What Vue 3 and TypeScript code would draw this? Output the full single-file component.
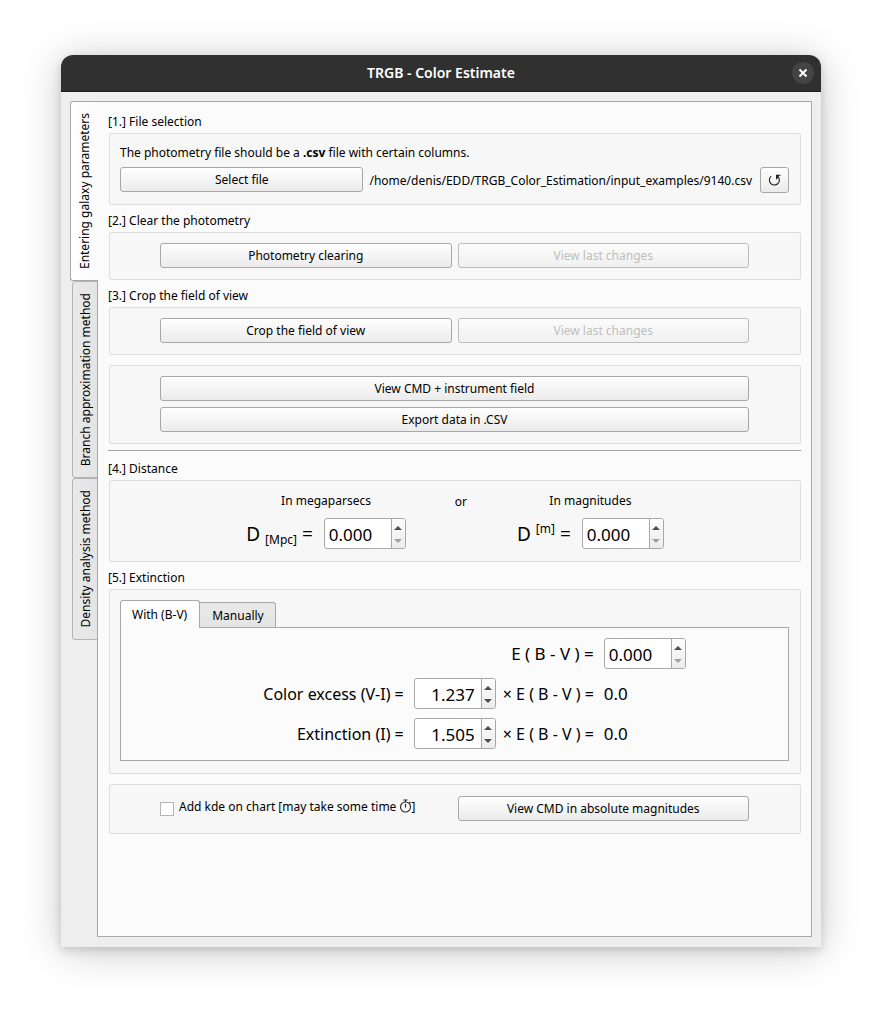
<script setup lang="ts">
import { computed, reactive, ref } from 'vue'

type SpinKey = 'mpc' | 'mag' | 'ebv' | 'vi' | 'ext'

const sideTabs = ['Entering galaxy parameters', 'Branch approximation method', 'Density analysis method']
const extinctionTabs = ['With (B-V)', 'Manually']
const activeSide = ref(0)
const activeExt = ref(0)
const addKde = ref(false)
const values = reactive<Record<SpinKey, string>>({
  mpc: '0.000',
  mag: '0.000',
  ebv: '0.000',
  vi: '1.237',
  ext: '1.505',
})

const num = (k: SpinKey) => Number(values[k]) || 0

function step(k: SpinKey, delta: number) {
  values[k] = Math.max(0, num(k) + delta).toFixed(3)
}

function product(k: SpinKey) {
  const v = Math.round(num(k) * num('ebv') * 1000) / 1000
  return Number.isInteger(v) ? v.toFixed(1) : String(v)
}

const colorExcess = computed(() => product('vi'))
const extinction = computed(() => product('ext'))

const distances: { key: SpinKey; title: string; unit: string; sub: boolean }[] = [
  { key: 'mpc', title: 'In megaparsecs', unit: '[Mpc]', sub: true },
  { key: 'mag', title: 'In magnitudes', unit: '[m]', sub: false },
]

const coefficients: { key: SpinKey; label: string }[] = [
  { key: 'vi', label: 'Color excess (V-I) =' },
  { key: 'ext', label: 'Extinction (I) =' },
]
</script>

<template>
  <div class="desktop">
    <div class="window">
      <header class="titlebar">
        <h1>TRGB - Color Estimate</h1>
        <button class="close" type="button" aria-label="Close">
          <svg viewBox="0 0 10 10" width="10" height="10"><path d="M1.5 1.5 8.5 8.5M8.5 1.5 1.5 8.5" /></svg>
        </button>
      </header>

      <div class="body">
        <nav class="side" role="tablist" aria-orientation="vertical">
          <button
            v-for="(t, i) in sideTabs"
            :key="t"
            type="button"
            role="tab"
            class="side-tab"
            :class="{ active: activeSide === i }"
            :aria-selected="activeSide === i"
            @click="activeSide = i"
          >
            <span>{{ t }}</span>
          </button>
        </nav>

        <main class="pane">
          <h2>[1.] File selection</h2>
          <section class="group">
            <p class="hint">The photometry file should be a <b>.csv</b> file with certain columns.</p>
            <div class="file-row">
              <button class="btn" type="button">Select file</button>
              <span class="path">/home/denis/EDD/TRGB_Color_Estimation/input_examples/9140.csv</span>
              <button class="btn reload" type="button" aria-label="Reload">
                <svg viewBox="0 0 14 14" width="14" height="14">
                  <path d="M3.2 3.2A5 5 0 1 0 10 3.6" />
                  <path class="head" d="M8 1.8H12.6V2.8H11L9 6.2H8Z" />
                </svg>
              </button>
            </div>
          </section>

          <h2>[2.] Clear the photometry</h2>
          <section class="group pair">
            <button class="btn" type="button">Photometry clearing</button>
            <button class="btn" type="button" disabled>View last changes</button>
          </section>

          <h2>[3.] Crop the field of view</h2>
          <section class="group pair">
            <button class="btn" type="button">Crop the field of view</button>
            <button class="btn" type="button" disabled>View last changes</button>
          </section>

          <section class="group stack">
            <button class="btn" type="button">View CMD + instrument field</button>
            <button class="btn" type="button">Export data in .CSV</button>
          </section>

          <hr />

          <h2 class="after-rule">[4.] Distance</h2>
          <section class="group distance">
            <template v-for="(d, i) in distances" :key="d.key">
              <span v-if="i === 1" class="or">or</span>
              <div class="dist">
                <span class="dist-title">{{ d.title }}</span>
                <div class="dist-row">
                  <label class="big" :for="d.key">
                    D <sub v-if="d.sub">{{ d.unit }}</sub><sup v-else>{{ d.unit }}</sup> =
                  </label>
                  <div class="spin">
                    <input :id="d.key" v-model="values[d.key]" type="text" inputmode="decimal" />
                    <div class="steps">
                      <button type="button" aria-label="Increase" @click="step(d.key, 0.1)"><i class="up"></i></button>
                      <button type="button" aria-label="Decrease" :disabled="num(d.key) <= 0" @click="step(d.key, -0.1)"><i class="down"></i></button>
                    </div>
                  </div>
                </div>
              </div>
            </template>
          </section>

          <h2>[5.] Extinction</h2>
          <section class="group ext">
            <div class="tabs" role="tablist">
              <button
                v-for="(t, i) in extinctionTabs"
                :key="t"
                type="button"
                role="tab"
                class="tab"
                :class="{ active: activeExt === i }"
                :aria-selected="activeExt === i"
                @click="activeExt = i"
              >
                {{ t }}
              </button>
            </div>
            <div class="ext-pane">
              <label class="formula ebv" for="ebv">E ( B - V ) =</label>
              <div class="spin">
                <input id="ebv" v-model="values.ebv" type="text" inputmode="decimal" />
                <div class="steps">
                  <button type="button" aria-label="Increase" @click="step('ebv', 0.01)"><i class="up"></i></button>
                  <button type="button" aria-label="Decrease" :disabled="num('ebv') <= 0" @click="step('ebv', -0.01)"><i class="down"></i></button>
                </div>
              </div>
              <template v-for="c in coefficients" :key="c.key">
                <label class="formula name" :for="c.key">{{ c.label }}</label>
                <div class="spin right">
                  <input :id="c.key" v-model="values[c.key]" type="text" inputmode="decimal" />
                  <div class="steps">
                    <button type="button" aria-label="Increase" @click="step(c.key, 0.01)"><i class="up"></i></button>
                    <button type="button" aria-label="Decrease" @click="step(c.key, -0.01)"><i class="down"></i></button>
                  </div>
                </div>
                <span class="formula times">× E ( B - V ) =</span>
                <output class="result">{{ c.key === 'vi' ? colorExcess : extinction }}</output>
              </template>
            </div>
          </section>

          <section class="group pair last">
            <label class="check">
              <input v-model="addKde" type="checkbox" />
              <span>Add kde on chart [may take some time
                <svg class="watch" viewBox="0 0 13 14" width="13" height="14" aria-hidden="true">
                  <circle cx="6.5" cy="8" r="5" />
                  <path d="M4.5 1H8.5M6.5 1V3M6.5 5V8.5M10.2 2.8 11.6 4.2" />
                </svg>]</span>
            </label>
            <button class="btn" type="button">View CMD in absolute magnitudes</button>
          </section>
        </main>
      </div>
    </div>
  </div>
</template>

<style>
body {
  margin: 0;
  background: #fff;
}
</style>

<style scoped>
* {
  box-sizing: border-box;
}

.desktop {
  display: flex;
  min-height: 100vh;
  padding: 55px 61px 67px;
  font: 12px/17px "Noto Sans", "Open Sans", sans-serif;
  color: #000;
}

button,
input {
  font: inherit;
  color: inherit;
  margin: 0;
  padding: 0;
}

.window {
  flex: 1;
  min-width: 0;
  display: flex;
  flex-direction: column;
  background: #eee;
  border-radius: 12px 12px 0 0;
  box-shadow: 0 3px 10px rgba(0, 0, 0, 0.15), 0 4px 40px rgba(0, 0, 0, 0.22);
}

.titlebar {
  display: grid;
  grid-template-columns: 1fr auto 1fr;
  align-items: center;
  height: 37px;
  padding: 0 7px;
  background: #303030;
  border-bottom: 1px solid #1c1c1c;
  border-radius: 12px 12px 0 0;
  color: #fff;
}

h1 {
  grid-column: 2;
  margin: 0;
  font-size: 14px;
  line-height: 20px;
  font-weight: 600;
}

.close {
  justify-self: end;
  display: grid;
  place-items: center;
  width: 22px;
  height: 22px;
  border: 0;
  border-radius: 50%;
  background: #444;
}

.close path {
  fill: none;
  stroke: #fff;
  stroke-width: 2;
}

.body {
  flex: 1;
  display: flex;
  padding: 9px 9px 10px;
}

.side {
  display: flex;
  flex-direction: column;
  align-items: flex-end;
  width: 28px;
  margin-right: -1px;
}

.side-tab {
  display: flex;
  align-items: center;
  justify-content: center;
  width: 26px;
  padding: 11px 0;
  border: 1px solid #b4b4b4;
  border-radius: 3px 0 0 3px;
  background: linear-gradient(90deg, #e9e9e9, #e4e4e4);
}

.side-tab.active {
  position: relative;
  z-index: 1;
  width: 28px;
  border-color: #a8a8a8;
  border-right: 0;
  background: linear-gradient(90deg, #fff, #fbfbfb);
}

.side-tab span {
  writing-mode: vertical-rl;
  transform: rotate(180deg);
  white-space: nowrap;
}

.pane {
  flex: 1;
  min-width: 0;
  padding: 11px 10px 11px 11px;
  border: 1px solid #a8a8a8;
  background: #fbfbfb;
}

h2 {
  margin: 7px 0 3px -1px;
  font: inherit;
}

h2:first-child {
  margin-top: 0;
}

h2.after-rule {
  margin-top: 9px;
}

hr {
  height: 1px;
  margin: 6px 0 0 -1px;
  border: 0;
  background: #a0a0a0;
}

.group {
  padding: 10px 11px 11px 10px;
  border: 1px solid #dedede;
  border-radius: 2px;
  background: #f7f7f7;
}

.group + .group {
  margin-top: 10px;
}

.hint {
  margin: 0 0 6px;
}

.btn {
  height: 25px;
  border: 1px solid #a8a8a8;
  border-radius: 3px;
  background: linear-gradient(#fefefe, #ebebeb);
}

.btn:disabled {
  border-color: #bcbcbc;
  background: linear-gradient(#fcfcfc, #f0f0f0);
  color: #bebebe;
}

.file-row {
  display: flex;
  align-items: flex-start;
}

.file-row .btn:first-child {
  flex: 1;
}

.path {
  margin: 5px 8px 0 6px;
}

.btn.reload {
  display: grid;
  place-items: center;
  width: 29px;
  height: 26px;
}

.reload path {
  fill: none;
  stroke: #222;
  stroke-width: 1.1;
}

.reload .head {
  fill: #222;
  stroke: none;
}

.pair {
  display: grid;
  grid-template-columns: 1fr 1fr;
  gap: 6px;
  padding: 10px 51px 11px 50px;
}

.stack {
  display: grid;
  gap: 6px;
  padding: 10px 51px 11px 50px;
}

.distance {
  display: flex;
  justify-content: center;
  align-items: flex-start;
  padding: 11px 0 12px;
}

.dist {
  display: flex;
  flex-direction: column;
  align-items: center;
  gap: 9px;
}

.or {
  margin: 1px 50px 0 49px;
}

.dist-row {
  display: flex;
  align-items: center;
  gap: 11px;
}

.big {
  padding-top: 2px;
  font-size: 19px;
  line-height: 29px;
  white-space: nowrap;
}

.big sub,
.big sup {
  font-size: 12px;
  line-height: 0;
}

.big sub {
  vertical-align: -3px;
}

.big sup {
  vertical-align: 8px;
}

.spin {
  display: flex;
  width: 82px;
  height: 31px;
  border: 1px solid #a8a8a8;
  border-radius: 3px;
  background: #fff;
  overflow: hidden;
}

.spin input {
  flex: 1;
  min-width: 0;
  border: 0;
  outline: 0;
  padding: 2px 6px 0 4px;
  background: none;
  font-size: 17px;
}

.spin.right input {
  text-align: right;
}

.steps {
  display: flex;
  flex-direction: column;
  width: 14px;
  padding: 2px 0 1px;
  border-left: 1px solid #a8a8a8;
  background: linear-gradient(#fdfdfd, #ececec);
}

.steps button {
  flex: 1;
  display: grid;
  place-items: center;
  border: 0;
  background: none;
}

.steps i {
  border: 4px solid transparent;
}

.steps .up {
  border-top: 0;
  border-bottom-color: #4d4d4d;
}

.steps .down {
  border-bottom: 0;
  border-top-color: #4d4d4d;
}

.steps button:disabled .down {
  border-top-color: #a0a0a0;
}

.tabs {
  display: flex;
  align-items: flex-end;
  height: 28px;
  margin-bottom: -1px;
}

.tab {
  height: 26px;
  padding: 0 11px 0 12px;
  border: 1px solid #a8a8a8;
  border-left: 0;
  border-radius: 0 3px 0 0;
  background: linear-gradient(#e9e9e9, #e4e4e4);
}

.tab.active {
  position: relative;
  height: 28px;
  padding: 0 12px 0 11px;
  border-left: 1px solid #a8a8a8;
  border-bottom: 0;
  border-radius: 3px 3px 0 0;
  background: linear-gradient(#fff, #fbfbfb);
}

.ext {
  padding-bottom: 12px;
}

.ext-pane {
  display: grid;
  grid-template-columns: 283fr 82px auto 178fr;
  align-items: center;
  row-gap: 9px;
  padding: 10px 0 11px;
  border: 1px solid #a8a8a8;
  background: #fbfbfb;
}

.formula {
  font-size: 16px;
  line-height: 22px;
  white-space: nowrap;
}

.name,
.ebv {
  justify-self: end;
  margin-right: 10px;
}

.ebv {
  grid-column: 1 / 4;
  font-size: 17px;
}

.times {
  margin: 0 10px 0 7px;
}

.result {
  font-size: 17px;
  line-height: 24px;
}

.last {
  padding: 11px 51px 12px 50px;
}

.check {
  display: flex;
  align-items: center;
  gap: 5px;
  white-space: nowrap;
}

.check span {
  padding-bottom: 4px;
}

.check input {
  appearance: none;
  width: 14px;
  height: 14px;
  border: 1px solid #b4b4b4;
  background: #fff;
}

.check input:checked {
  background: #4d4d4d;
  box-shadow: inset 0 0 0 2px #fff;
}

.watch {
  vertical-align: -2px;
  margin-left: -1px;
  fill: none;
  stroke: #222;
  stroke-width: 1.1;
}
</style>
